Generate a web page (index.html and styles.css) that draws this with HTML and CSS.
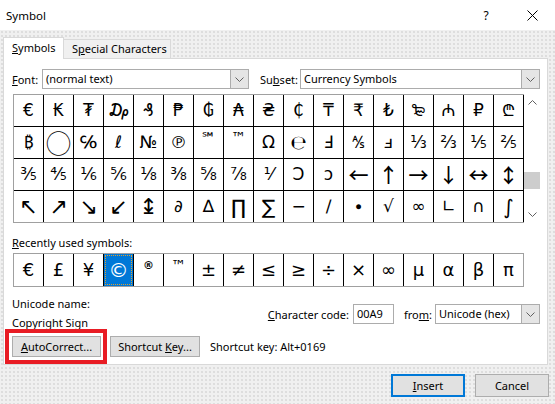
FILE: index.html
```html
<!DOCTYPE html>
<html lang="en">
<head>
<meta charset="utf-8">
<title>Symbol</title>
<link rel="stylesheet" href="styles.css">
</head>
<body>
<div class="titlebar">
  <span class="title">Symbol</span>
  <span class="cap-btn help">?</span>
  <span class="cap-btn close">
    <svg width="11" height="11" viewBox="0 0 11 11"><path d="M0.5 0.5 L10.5 10.5 M10.5 0.5 L0.5 10.5" stroke="#000" stroke-width="1" fill="none"/></svg>
  </span>
</div>
<div class="dialog">
  <div class="tabs">
    <div class="tab active"><u>S</u>ymbols</div>
    <div class="tab">S<u>p</u>ecial Characters</div>
  </div>
  <div class="panel">
    <div class="fontrow">
      <span class="lbl lbl-font"><u>F</u>ont:</span>
      <div class="select sel-font"><span class="sel-text">(normal text)</span><span class="sel-arrow"><svg width="9" height="5" viewBox="0 0 9 5"><polyline points="0.5,0.5 4.5,4.5 8.5,0.5" stroke="#606060" fill="none"/></svg></span></div>
      <span class="lbl lbl-subset">Su<u>b</u>set:</span>
      <div class="select sel-subset"><span class="sel-text">Currency Symbols</span><span class="sel-arrow"><svg width="9" height="5" viewBox="0 0 9 5"><polyline points="0.5,0.5 4.5,4.5 8.5,0.5" stroke="#606060" fill="none"/></svg></span></div>
    </div>
    <div class="charmap">
      <div class="grid">
        <span>€</span><span>₭</span><span>₮</span><span>₯</span><span>₰</span><span>₱</span><span>₲</span><span>₳</span><span>₴</span><span>₵</span><span>₸</span><span>₹</span><span>₺</span><span>₻</span><span>₼</span><span>₽</span><span>₾</span>
        <span>₿</span><span class="circle">◯</span><span>℅</span><span>ℓ</span><span>№</span><span>℗</span><span class="sup">℠</span><span class="sup">™</span><span>Ω</span><span class="est">℮</span><span>Ⅎ</span><span>⅍</span><span>ⅎ</span><span>⅓</span><span>⅔</span><span>⅕</span><span>⅖</span>
        <span>⅗</span><span>⅘</span><span>⅙</span><span>⅚</span><span>⅛</span><span>⅜</span><span>⅝</span><span>⅞</span><span>⅟</span><span>Ↄ</span><span>ↄ</span><span class="thin">←</span><span class="thin">↑</span><span class="thin">→</span><span class="thin">↓</span><span class="thin">↔</span><span class="thin">↕</span>
        <span class="arr">↖</span><span class="arr">↗</span><span class="arr">↘</span><span class="arr">↙</span><span class="arr">↨</span><span>∂</span><span>∆</span><span class="big">∏</span><span class="big">∑</span><span>−</span><span>∕</span><span>∙</span><span>√</span><span>∞</span><span>∟</span><span>∩</span><span class="big">∫</span>
      </div>
      <div class="vscroll">
        <span class="sb-arrow"><svg width="9" height="5" viewBox="0 0 9 5"><polyline points="0.5,4.5 4.5,0.5 8.5,4.5" stroke="#606060" fill="none"/></svg></span>
        <div class="sb-track"><div class="sb-thumb"></div></div>
        <span class="sb-arrow"><svg width="9" height="5" viewBox="0 0 9 5"><polyline points="0.5,0.5 4.5,4.5 8.5,0.5" stroke="#606060" fill="none"/></svg></span>
      </div>
    </div>
    <div class="lbl recent-label"><u>R</u>ecently used symbols:</div>
    <div class="recent">
      <span>€</span><span>£</span><span>¥</span><span class="selected"><i>©</i></span><span class="sup small">®</span><span class="sup">™</span><span>±</span><span>≠</span><span>≤</span><span>≥</span><span>÷</span><span>×</span><span>∞</span><span>µ</span><span>α</span><span>β</span><span>π</span>
    </div>
    <div class="info">
      <div class="uname">
        <div class="line">Unicode name:</div>
        <div class="line second">Copyright Sign</div>
      </div>
      <div class="codebox">
        <span class="lbl"><u>C</u>haracter code:</span>
        <span class="input">00A9</span>
        <span class="lbl lbl-from">fro<u>m</u>:</span>
        <div class="select sel-from"><span class="sel-text">Unicode (hex)</span><span class="sel-arrow"><svg width="9" height="5" viewBox="0 0 9 5"><polyline points="0.5,0.5 4.5,4.5 8.5,0.5" stroke="#606060" fill="none"/></svg></span></div>
      </div>
    </div>
    <div class="actions">
      <span class="btn btn-auto"><u>A</u>utoCorrect...</span>
      <span class="btn btn-key">Shortcut <u>K</u>ey...</span>
      <span class="shortcut">Shortcut key: Alt+0169</span>
    </div>
  </div>
  <div class="footer">
    <span class="btn btn-main default"><u>I</u>nsert</span>
    <span class="btn btn-main">Cancel</span>
  </div>
</div>
<div class="highlight"></div>
</body>
</html>
```

FILE: styles.css
```css
* { box-sizing: border-box; }
html, body { margin: 0; padding: 0; }
body {
  width: 555px;
  height: 404px;
  overflow: hidden;
  position: relative;
  font-family: "Noto Sans", "Open Sans", sans-serif;
  font-size: 11px;
  color: #000;
  background: #fff;
}
u { text-decoration: underline; text-underline-offset: 1px; }

.titlebar {
  height: 30px;
  background: #fff;
  display: flex;
  align-items: center;
}
.title { padding-left: 6px; font-size: 11.5px; }
.cap-btn {
  width: 46px;
  height: 30px;
  display: flex;
  align-items: center;
  justify-content: center;
}
.help { margin-left: auto; font-size: 12px; }

.dialog {
  height: 374px;
  background-color: #f0f0f0;
  background-image: radial-gradient(circle, #dcdcdc 0.7px, transparent 0.8px);
  background-size: 4px 4px;
  padding: 7px 7px 0 3px;
}

.tabs { display: flex; align-items: flex-end; height: 21px; position: relative; z-index: 1; }
.tab {
  height: 19px;
  line-height: 18px;
  padding: 0 0 0 8px;
  border: 1px solid #d9d9d9;
  border-bottom: none;
  background: #f0f0f0;
  white-space: nowrap;
}
.tab.active {
  height: 22px;
  line-height: 20px;
  width: 61px;
  background: #fff;
  margin-bottom: -1px;
}
.tab + .tab { border-left: none; width: 107px; }

.panel {
  background: #fff;
  border: 1px solid #d9d9d9;
  height: 307px;
  padding: 10px 7px 7px 8px;
}

.fontrow { display: flex; align-items: center; height: 20px; }
.lbl { white-space: nowrap; }
.lbl-font { width: 30px; }
.lbl-subset { width: 40px; margin-left: 11px; }
.select {
  height: 20px;
  border: 1px solid #acacac;
  display: flex;
  align-items: stretch;
  background: #fff;
}
.sel-text { flex: 1; padding-left: 3px; line-height: 18px; white-space: nowrap; }
.sel-arrow {
  width: 18px;
  background: #e5e5e5;
  border-left: 1px solid #acacac;
  display: flex;
  align-items: center;
  justify-content: center;
}
.sel-font { width: 207px; }
.sel-subset { width: 240px; }
.sel-from { width: 105px; }

.charmap { display: flex; margin-top: 5px; margin-left: 1px; }
.grid, .recent {
  display: grid;
  grid-template-columns: repeat(17, 29px);
  gap: 1px;
  width: max-content;
  background: #000;
  border: 1px solid #a0a0a0;
  font-family: "DejaVu Sans", "Noto Sans", sans-serif;
  font-size: 17px;
}
.grid {
  grid-auto-rows: 31px;
  border-right: none;
  padding-right: 1px;
}
.grid span, .recent span {
  background: #fff;
  display: flex;
  align-items: center;
  justify-content: center;
  line-height: 1;
}
.grid .arr { font-size: 22px; }
.grid .thin { font-family: "Noto Sans CJK JP", "DejaVu Sans", sans-serif; font-size: 20px; font-weight: 500; }
.grid .big { font-size: 20px; }
.grid .est { font-size: 19px; }
.grid .circle { font-family: "Noto Sans CJK JP", "DejaVu Sans", sans-serif; font-size: 25px; }
.grid .sup, .recent .sup {
  font-size: 15px;
  padding-bottom: 8px;
}
.recent .sup.small { font-size: 11px; font-weight: bold; padding-bottom: 10px; }
.vscroll {
  width: 16px;
  display: flex;
  flex-direction: column;
}
.sb-arrow {
  height: 17px;
  display: flex;
  align-items: center;
  justify-content: center;
}
.sb-track { flex: 1; }
.sb-thumb { height: 17px; margin-top: 61px; background: #cdcdcd; }

.recent-label { margin-top: 12px; line-height: 16px; }
.recent {
  margin-top: 2px;
  margin-left: 1px;
  grid-template-rows: 32px;
  font-size: 18px;
}
.recent .selected { background: #0078d7; color: #fff; padding: 1px; }
.recent .selected i {
  font-style: normal;
  width: 100%;
  height: 100%;
  display: flex;
  align-items: center;
  justify-content: center;
  outline: 1px dotted #e0a030;
  outline-offset: -1px;
  font-size: 20px;
}

.info { display: flex; }
.uname { margin-top: 9px; }
.uname .line { line-height: 16px; }
.uname .second { margin-top: 3px; }
.codebox {
  margin-left: auto;
  margin-top: 17px;
  height: 20px;
  display: flex;
  align-items: center;
}
.input {
  width: 41px;
  height: 20px;
  line-height: 18px;
  border: 1px solid #acacac;
  margin-left: 4px;
  padding-left: 3px;
}
.lbl-from { margin-left: 10px; margin-right: 3px; }

.actions { display: flex; align-items: center; margin-top: 5px; }
.btn {
  display: block;
  height: 21px;
  line-height: 19px;
  text-align: center;
  background: #e1e1e1;
  border: 1px solid #adadad;
  white-space: nowrap;
}
.btn-auto { width: 89px; }
.btn-key { width: 90px; margin-left: 9px; }
.shortcut { margin-left: 10px; }

.footer {
  display: flex;
  justify-content: flex-end;
  margin-top: 9px;
  margin-right: -1px;
}
.btn-main { width: 74px; height: 23px; line-height: 21px; margin-left: 10px; }
.btn-main.default { border: 2px solid #0078d7; line-height: 19px; }

.highlight {
  position: absolute;
  left: 5px;
  top: 329px;
  width: 102px;
  height: 35px;
  border: 4px solid #e81c24;
}
```
